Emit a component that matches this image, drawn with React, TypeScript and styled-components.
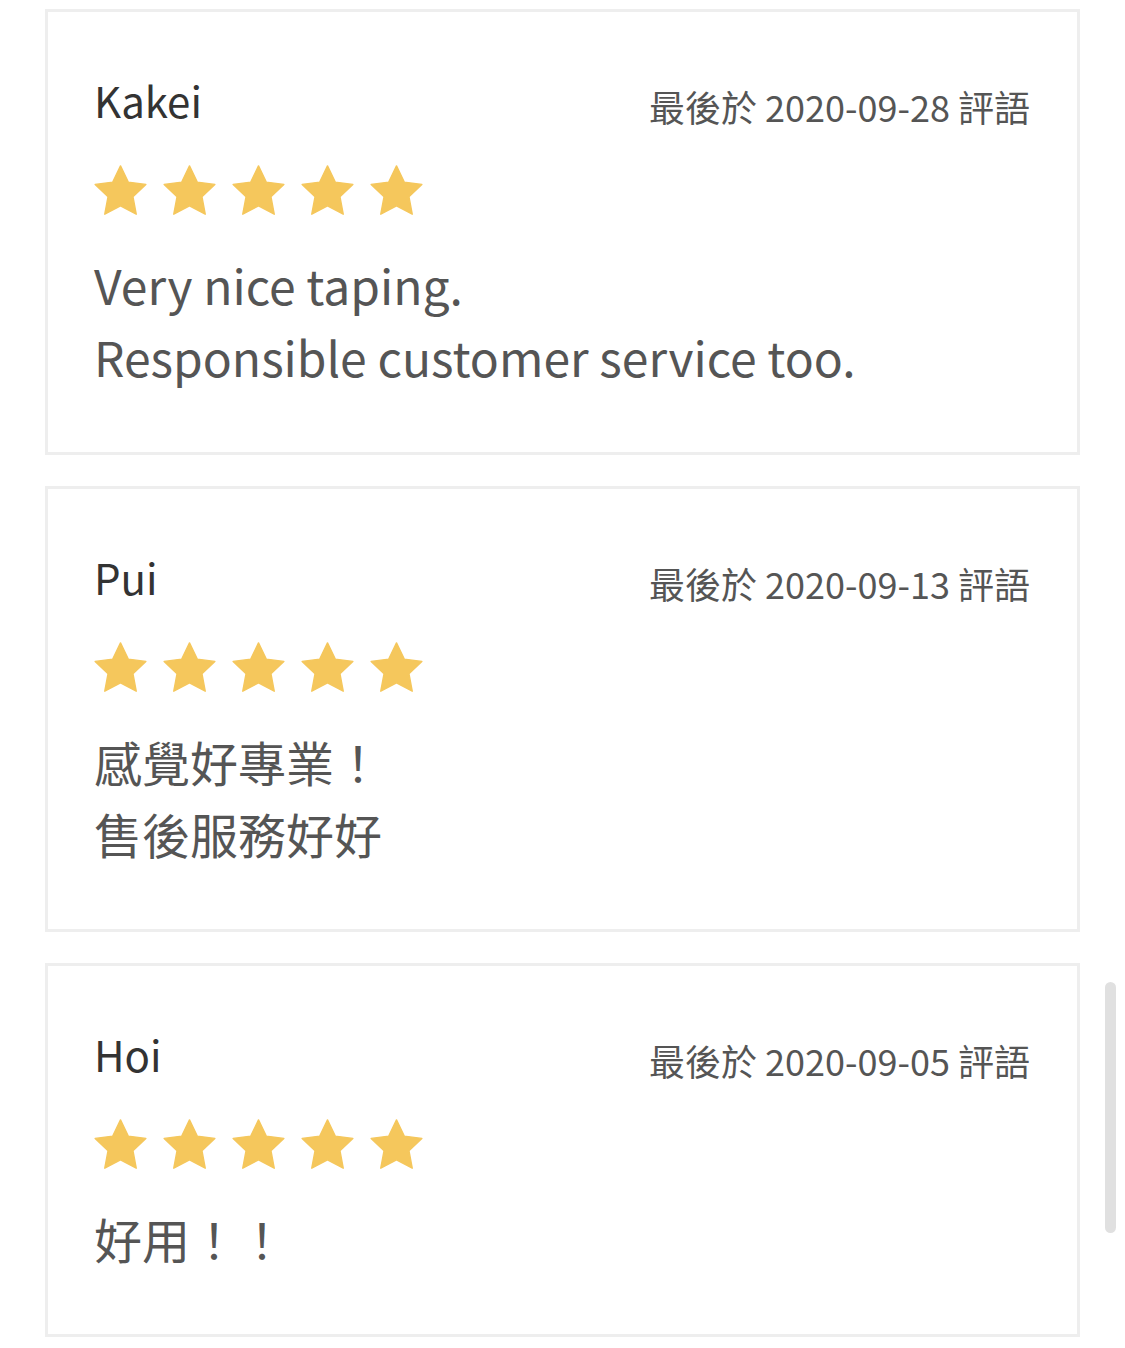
import React from 'react';
import styled, { createGlobalStyle } from 'styled-components';

type Review = {
  name: string;
  date: string;
  lines: string[];
  rating: number;
};

const reviews: Review[] = [
  {
    name: 'Kakei',
    date: '2020-09-28',
    lines: ['Very nice taping.', 'Responsible customer service too.'],
    rating: 5,
  },
  {
    name: 'Pui',
    date: '2020-09-13',
    lines: ['感覺好專業！', '售後服務好好'],
    rating: 5,
  },
  {
    name: 'Hoi',
    date: '2020-09-05',
    lines: ['好用！！'],
    rating: 5,
  },
];

function Star() {
  return (
    <svg width="59" height="54" viewBox="0 0 24 23" aria-hidden="true">
      <path
        d="M12 0.8l3.3 6.9 7.5 1-5.5 5.2 1.4 7.5L12 17.8l-6.7 3.6 1.4-7.5L1.2 8.7l7.5-1z"
        fill="#f5c75c"
        stroke="#f5c75c"
        strokeWidth="0.6"
        strokeLinejoin="round"
      />
    </svg>
  );
}

function ReviewCard({ review }: { review: Review }) {
  return (
    <Card>
      <Header>
        <Name>{review.name}</Name>
        <DateText>最後於 {review.date} 評語</DateText>
      </Header>
      <Stars>
        {Array.from({ length: review.rating }).map((_, i) => (
          <Star key={i} />
        ))}
      </Stars>
      <Body>
        {review.lines.map((line, i) => (
          <div key={i}>{line}</div>
        ))}
      </Body>
    </Card>
  );
}

export default function App() {
  return (
    <>
      <GlobalStyle />
      <Page>
        {reviews.map((r) => (
          <ReviewCard key={r.name} review={r} />
        ))}
      </Page>
      <ScrollThumb />
    </>
  );
}

// Styles
const GlobalStyle = createGlobalStyle`
  html, body {
    margin: 0;
    padding: 0;
    background: #ffffff;
    overflow: hidden;
  }

  body {
    font-family: "Noto Sans CJK TC", "Noto Sans", sans-serif;
  }
`;

const Page = styled.div`
  display: flex;
  flex-direction: column;
  gap: 31px;
  padding: 9px 45px 0;
`;

const Card = styled.div`
  border: 3px solid #eeeeee;
  padding: 56px 47px 60px 46px;
`;

const Header = styled.div`
  display: flex;
  justify-content: space-between;
  align-items: flex-start;
`;

const Name = styled.div`
  margin-top: 2px;
  font-size: 42px;
  line-height: 60px;
  color: #333333;
`;

const DateText = styled.div`
  margin-top: 8px;
  font-size: 36px;
  line-height: 60px;
  color: #555555;
`;

const Stars = styled.div`
  display: flex;
  gap: 10px;
  margin-top: 28px;
  margin-left: -3px;
`;

const Body = styled.div`
  margin-top: 30px;
  font-size: 48px;
  line-height: 72px;
  color: #555555;
`;

const ScrollThumb = styled.div`
  position: fixed;
  left: 1105px;
  top: 982px;
  width: 11px;
  height: 251px;
  border-radius: 6px;
  background: #e0e0e0;
`;
